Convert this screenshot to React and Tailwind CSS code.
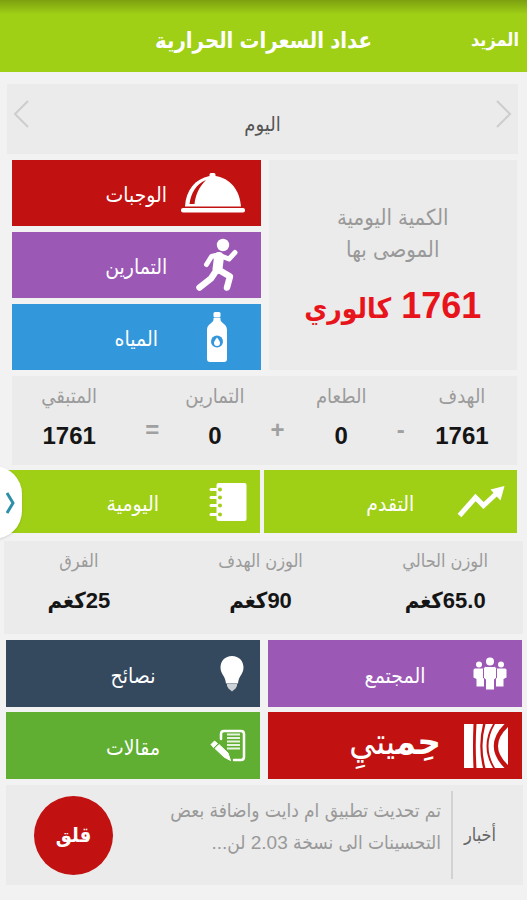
import React from "react";

function ClocheIcon() {
  return (
    <svg width="64" height="42" viewBox="0 0 64 42" fill="#fff" aria-hidden="true">
      <rect x="0" y="36" width="64" height="4.500" rx="2" />
      <path d="M4 34.500C5 18 14 7 28.500 4V2.500Q28.500 1 30 1h3q1.500 0 1.500 1.500V4C49 6 59 18 60 34.500Z" />
      <path d="M8.500 32C10 21 15 12 25 8C18 15 14.500 23 13.500 32Z" fill="#c21111" />
    </svg>
  );
}

function RunnerIcon() {
  return (
    <svg width="42" height="54" viewBox="0 0 42 54" fill="none" stroke="#fff" strokeLinecap="round" strokeLinejoin="round" aria-hidden="true">
      <circle cx="27" cy="7" r="6.200" fill="#fff" stroke="none" />
      <path d="M23 19L21.500 31" strokeWidth="10" />
      <path d="M22 17L15.500 18.500L10.500 26.500" strokeWidth="5" />
      <path d="M25 18L33 21L39 14.500" strokeWidth="5" />
      <path d="M20 33L15 40.500L3.500 49.500" strokeWidth="6.500" />
      <path d="M23 32L34 38.500L31 49.500" strokeWidth="6.500" />
    </svg>
  );
}

function BottleIcon() {
  return (
    <svg width="22" height="52" viewBox="0 0 22 52" fill="#fff" aria-hidden="true">
      <rect x="7.500" y="1" width="7" height="5.500" rx="1.500" />
      <path d="M7.500 7H14.500V9C15 12 21 13 21 19V48Q21 51 18 51H4Q1 51 1 48V19C1 13 7 12 7.500 9Z" />
      <circle cx="11" cy="30.500" r="6" fill="#3398db" />
      <path d="M11 26.500C13 29 14 30.500 14 32A3 3 0 0 1 8 32C8 30.500 9 29 11 26.500Z" />
    </svg>
  );
}

function TrendIcon() {
  return (
    <svg width="48" height="34" viewBox="0 0 48 34" aria-hidden="true">
      <path d="M2.500 30.500L18.500 12.500L26.500 20.500L40 8" fill="none" stroke="#fff" strokeWidth="5" />
      <path d="M47.500 1L33.500 4.500L43.500 15.500Z" fill="#fff" />
    </svg>
  );
}

function NotebookIcon() {
  return (
    <svg width="38" height="40" viewBox="0 0 38 40" aria-hidden="true">
      <rect x="7.500" y="1" width="30" height="38" rx="2" fill="#fff" />
      {[7.500, 15.500, 23.500, 32.500].map((y) => (
        <g key={y}>
          <path d={`M2 ${y}H8`} stroke="#fff" strokeWidth="3" strokeLinecap="round" />
          <circle cx="11" cy={y} r="2" fill="#9fd016" />
        </g>
      ))}
    </svg>
  );
}

function CommunityIcon() {
  return (
    <svg width="34" height="34" viewBox="0 0 34 34" fill="#fff" aria-hidden="true">
      <circle cx="6" cy="7.500" r="3" />
      <circle cx="28" cy="7.500" r="3" />
      <path d="M2 11.500H11V29.500H3.500V22L.5 20.500V13Q.5 11.500 2 11.500Z" />
      <path d="M32 11.500H23V29.500H30.500V22L33.500 20.500V13Q33.500 11.500 32 11.500Z" />
      <circle cx="17" cy="4.500" r="4" />
      <path d="M12.500 9.500H21.500Q23.500 9.500 23.500 11.500V21L21.500 22.500V33H12.500V22.500L10.500 21V11.500Q10.500 9.500 12.500 9.500Z" stroke="#9b59b5" strokeWidth="1" />
    </svg>
  );
}

function BulbIcon() {
  return (
    <svg width="24" height="36" viewBox="0 0 24 36" fill="#fff" aria-hidden="true">
      <path d="M12 0C5 0 .5 5 .5 11.500C.5 18 5.500 20 6 27.500H18C18.500 20 23.500 18 23.500 11.500C23.500 5 19 0 12 0Z" />
      <path d="M7 28H17V30L15.500 32.500L12 35.500L8.500 32.500L7 30Z" opacity=".75" />
    </svg>
  );
}

function StripesIcon() {
  return (
    <svg width="44" height="44" viewBox="0 0 44 44" fill="#fff" aria-hidden="true">
      <path d="M0 0H9.500Q8.500 22 9.500 44H0Z" />
      <path d="M12.500 0H19Q13.500 22 19 44H12.500Q11 22 12.500 0Z" />
      <path d="M21.500 0H29Q16 22 29 44H21.500Q15.500 22 21.500 0Z" />
      <path d="M31 0H40.500Q19 22 40.500 44H31Q18 22 31 0Z" />
      <path d="M44 3V41Q24 22 44 3Z" />
    </svg>
  );
}

function ArticleIcon() {
  return (
    <svg width="36" height="34" viewBox="0 0 36 34" aria-hidden="true">
      <path d="M11 10V5Q11 2 14 2H31Q34 2 34 5V28Q34 31 31 31H24" fill="none" stroke="#fff" strokeWidth="2.500" strokeLinecap="round" />
      <path d="M17 5.500H30M17 9H30M17 12.500H30M17 16H30M17 19.500H30" stroke="#fff" strokeWidth="2" opacity=".85" />
      <path d="M1 15.500L4.500 12L7.500 14.500L3.500 18.500ZM5 19.500L9 15.500L18 24L20.500 31.500L14 28Z" fill="#fff" stroke="#fff" strokeLinejoin="round" />
    </svg>
  );
}

function Tile({ color, icon, inset = "ps-2", height = "h-[67px]", children }) {
  return (
    <button type="button" className={`grid w-full grid-cols-[1fr_auto_1fr] items-center text-[21px] text-white ${height} ${color}`}>
      <span className={`flex ${inset}`}>
        <span className="flex w-12 justify-center">{icon}</span>
      </span>
      <span className="pt-1">{children}</span>
    </button>
  );
}

function Stat({ label, value, labelSize = "text-xl", valueSize = "text-2xl" }) {
  return (
    <div className="flex flex-col items-center whitespace-nowrap">
      <dt className={`leading-7 text-[#9b9b9b] ${labelSize}`}>{label}</dt>
      <dd className={`pt-2.5 font-bold leading-8 text-[#151515] ${valueSize}`}>{value}</dd>
    </div>
  );
}

function WeightStat({ label, value }) {
  return <Stat label={label} value={value} labelSize="text-lg" valueSize="text-[22px]" />;
}

function Operator({ children }) {
  return <span className="pt-8 text-center text-2xl font-bold leading-8 text-[#a0a0a0]">{children}</span>;
}

function Chevron({ d }) {
  return (
    <svg width="16" height="28" viewBox="0 0 16 28" fill="none" stroke="#cdcdcd" strokeWidth="2" aria-hidden="true">
      <path d={d} />
    </svg>
  );
}

export default function App() {
  return (
    <div dir="rtl" lang="ar" className="min-h-screen overflow-hidden bg-[#f2f2f2] font-['Liberation_Sans','DejaVu_Sans_Condensed','DejaVu_Sans',sans-serif]">
      <header className="grid h-[72px] grid-cols-[1fr_auto_1fr] items-center bg-linear-to-b from-[#7da010] via-[#9fd016] via-20% to-[#9fd016] px-2 pt-2 font-bold text-white">
        <button type="button" className="justify-self-start text-lg">المزيد</button>
        <h1 className="text-[22px]">عداد السعرات الحرارية</h1>
      </header>

      <main className="pt-3">
        <nav className="me-[7px] ms-[9px] flex h-[70px] justify-between bg-[#ebebeb] px-1.5 pt-4">
          <button type="button" aria-label="اليوم السابق" className="self-start"><Chevron d="M1 1L14 14L1 27" /></button>
          <span className="pt-2.5 text-xl leading-7 text-[#555]">اليوم</span>
          <button type="button" aria-label="اليوم التالي" className="self-start"><Chevron d="M15 1L2 14L15 27" /></button>
        </nav>

        <div className="me-3 ms-2.5 mt-1.5 grid grid-cols-2 gap-2">
          <section className="flex flex-col items-center bg-[#ebebeb] pt-[42px]">
            <p className="text-center text-[22px] leading-8 text-[#999]">الكمية اليومية<br />الموصى بها</p>
            <p className="pt-5 text-4xl font-bold leading-10 text-[#e8141c]">1761 <span className="text-[28px]">كالوري</span></p>
          </section>
          <div className="flex flex-col gap-1.5">
            <Tile color="bg-[#c21111]" inset="ps-6" icon={<span className="flex w-16 shrink-0"><ClocheIcon /></span>} height="h-[66px]">الوجبات</Tile>
            <Tile color="bg-[#9b59b5]" inset="ps-5" icon={<RunnerIcon />} height="h-[66px]">التمارين</Tile>
            <Tile color="bg-[#3398db]" inset="ps-5" icon={<BottleIcon />} height="h-[66px]">المياه</Tile>
          </div>
        </div>

        <dl className="me-3 ms-2.5 mt-1.5 grid h-[89px] grid-cols-[70fr_52fr_67fr_60fr_65fr_60fr_106fr] bg-[#ebebeb] pe-1 ps-5 pt-1.5">
          <Stat label="الهدف" value="1761" />
          <Operator>-</Operator>
          <Stat label="الطعام" value="0" />
          <Operator>+</Operator>
          <Stat label="التمارين" value="0" />
          <Operator>=</Operator>
          <Stat label="المتبقي" value="1761" />
        </dl>

        <div className="relative me-1.5 ms-2.5 mt-[5px]">
          <div className="grid grid-cols-2 gap-1">
            <Tile color="bg-[#9fd016]" inset="ps-3" icon={<TrendIcon />} height="h-[63px]">التقدم</Tile>
            <Tile color="bg-[#9fd016]" icon={<NotebookIcon />} height="h-[63px]">اليومية</Tile>
          </div>
          <button type="button" aria-label="القائمة" className="absolute -left-10 -top-1 flex h-[73px] w-14 items-center rounded-full bg-white shadow" dir="ltr">
            <svg className="ms-10" width="12" height="24" viewBox="0 0 12 24" fill="none" stroke="#2f8fa8" strokeWidth="3" aria-hidden="true">
              <path d="M1 2L7 12L1 22" />
            </svg>
          </button>
        </div>

        <dl className="me-1 ms-1 mt-2 grid h-[93px] grid-cols-[156fr_214fr_150fr] bg-[#ebebeb] pt-1.5">
          <WeightStat label="الوزن الحالي" value="65.0كغم" />
          <WeightStat label="الوزن الهدف" value="90كغم" />
          <WeightStat label="الفرق" value="25كغم" />
        </dl>

        <div className="me-1.5 ms-[5px] mt-1.5 grid grid-cols-2 gap-x-2 gap-y-[5px]">
          <Tile color="bg-[#9b59b5]" icon={<CommunityIcon />}>المجتمع</Tile>
          <Tile color="bg-[#34495e]" inset="ps-1" icon={<BulbIcon />}>نصائح</Tile>
          <Tile color="bg-[#c21111]" inset="ps-3" icon={<StripesIcon />}>
            <span className="block pb-3 text-4xl leading-10"><b>حِم&zwj;</b>&zwj;يتيِ</span>
          </Tile>
          <Tile color="bg-[#60af33]" icon={<ArticleIcon />}>مقالات</Tile>
        </div>

        <section className="me-1.5 ms-1 mt-1.5 flex h-[100px] items-center bg-[#ebebeb] pe-7">
          <h2 className="w-[70px] shrink-0 ps-4 text-center text-lg text-[#666]">أخبار</h2>
          <p className="h-[88px] grow whitespace-nowrap border-s-2 border-[#d2d2d2] ps-2.5 pt-1 text-[19px] leading-8 text-[#999]">
            تم تحديث تطبيق ام دايت واضافة بعض<br />التحسينات الى نسخة 2.03 لن...
          </p>
          <button type="button" className="size-[79px] shrink-0 rounded-full bg-[#c21111] text-xl font-bold text-white">قلق</button>
        </section>
      </main>
    </div>
  );
}
